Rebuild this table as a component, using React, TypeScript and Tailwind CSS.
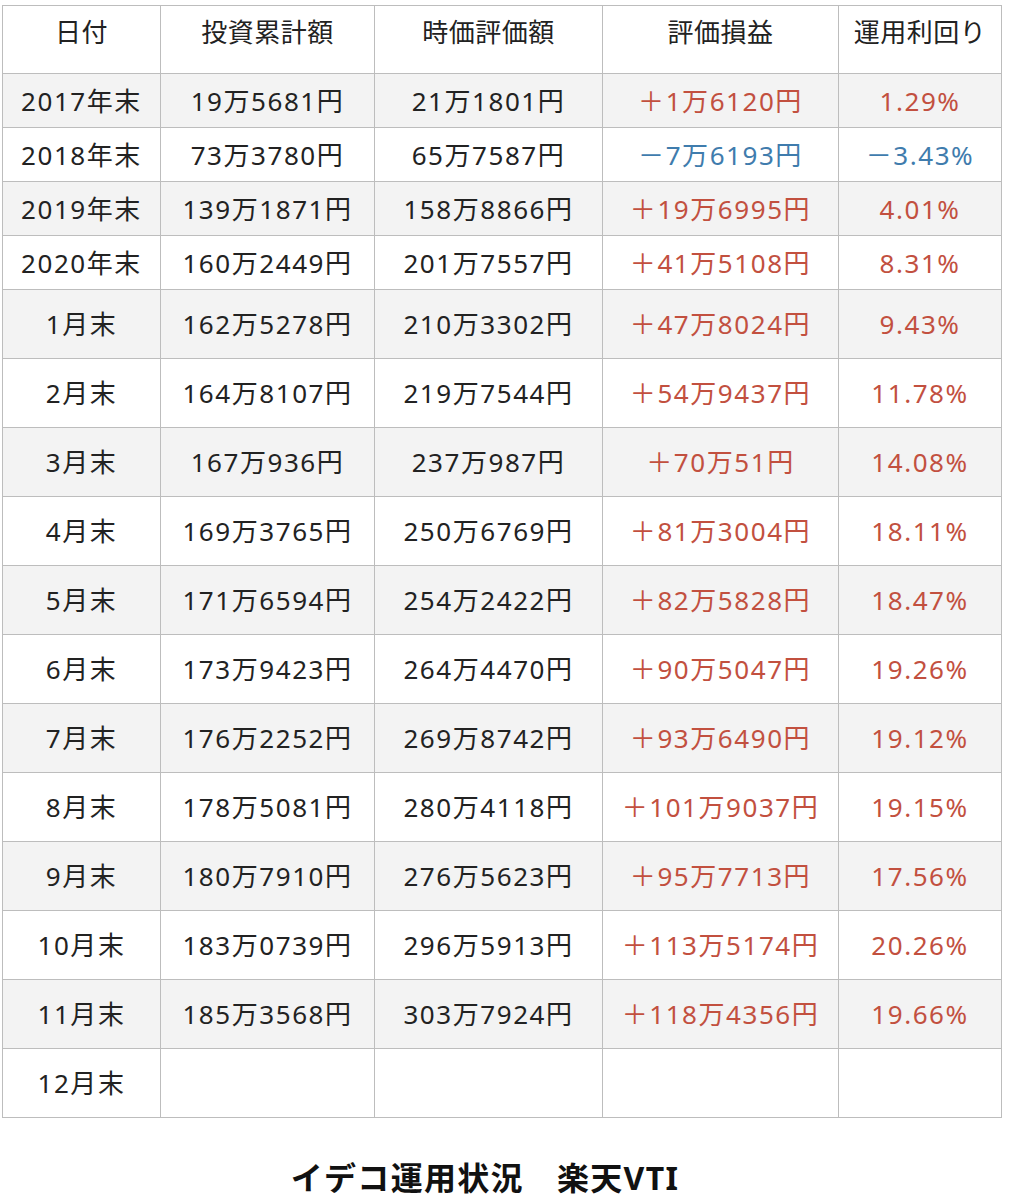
const rows: { d: string; inv: string; val: string; pl: string; rate: string; neg?: boolean }[] = [
  { d: '2017年末', inv: '19万5681円', val: '21万1801円', pl: '＋1万6120円', rate: '1.29%' },
  { d: '2018年末', inv: '73万3780円', val: '65万7587円', pl: '－7万6193円', rate: '－3.43%', neg: true },
  { d: '2019年末', inv: '139万1871円', val: '158万8866円', pl: '＋19万6995円', rate: '4.01%' },
  { d: '2020年末', inv: '160万2449円', val: '201万7557円', pl: '＋41万5108円', rate: '8.31%' },
  { d: '1月末', inv: '162万5278円', val: '210万3302円', pl: '＋47万8024円', rate: '9.43%' },
  { d: '2月末', inv: '164万8107円', val: '219万7544円', pl: '＋54万9437円', rate: '11.78%' },
  { d: '3月末', inv: '167万936円', val: '237万987円', pl: '＋70万51円', rate: '14.08%' },
  { d: '4月末', inv: '169万3765円', val: '250万6769円', pl: '＋81万3004円', rate: '18.11%' },
  { d: '5月末', inv: '171万6594円', val: '254万2422円', pl: '＋82万5828円', rate: '18.47%' },
  { d: '6月末', inv: '173万9423円', val: '264万4470円', pl: '＋90万5047円', rate: '19.26%' },
  { d: '7月末', inv: '176万2252円', val: '269万8742円', pl: '＋93万6490円', rate: '19.12%' },
  { d: '8月末', inv: '178万5081円', val: '280万4118円', pl: '＋101万9037円', rate: '19.15%' },
  { d: '9月末', inv: '180万7910円', val: '276万5623円', pl: '＋95万7713円', rate: '17.56%' },
  { d: '10月末', inv: '183万0739円', val: '296万5913円', pl: '＋113万5174円', rate: '20.26%' },
  { d: '11月末', inv: '185万3568円', val: '303万7924円', pl: '＋118万4356円', rate: '19.66%' },
  { d: '12月末', inv: '', val: '', pl: '', rate: '' },
]

const cell = 'border border-[#bdbdbd] text-center align-middle p-0 tracking-[0.06em]'

export default function App() {
  return (
    <div
      className="w-[1014px] min-h-[1200px] bg-white text-[#222] pt-[5px] pl-[2px]"
      style={{ fontFamily: '"Noto Sans", "Noto Sans CJK JP", sans-serif' }}
    >
      <table className="border-collapse w-[999px] table-fixed text-[26px] leading-none">
        <colgroup>
          <col className="w-[158px]" />
          <col className="w-[214px]" />
          <col className="w-[228px]" />
          <col className="w-[236px]" />
          <col className="w-[163px]" />
        </colgroup>
        <thead>
          <tr className="h-[68px]">
            {['日付', '投資累計額', '時価評価額', '評価損益', '運用利回り'].map((h) => (
              <th
                key={h}
                className="border border-[#bdbdbd] text-center align-top pt-[13px] font-normal tracking-[0.02em]"
              >
                {h}
              </th>
            ))}
          </tr>
        </thead>
        <tbody>
          {rows.map((r, i) => {
            const tone = r.neg ? 'text-[#3f7cad]' : 'text-[#c2503f]'
            return (
              <tr
                key={r.d}
                className={`${i < 4 ? 'h-[54px]' : 'h-[69px]'} ${i % 2 === 0 ? 'bg-[#f3f3f3]' : 'bg-white'}`}
              >
                <td className={cell}>{r.d}</td>
                <td className={cell}>{r.inv}</td>
                <td className={cell}>{r.val}</td>
                <td className={`${cell} ${tone}`}>{r.pl}</td>
                <td className={`${cell} ${tone}`}>{r.rate}</td>
              </tr>
            )
          })}
        </tbody>
      </table>

      <div className="mt-[44px] pr-[46px] text-center text-[32px] font-bold tracking-[0.04em] text-[#111] leading-none">
        イデコ運用状況　楽天VTI
      </div>
    </div>
  )
}
